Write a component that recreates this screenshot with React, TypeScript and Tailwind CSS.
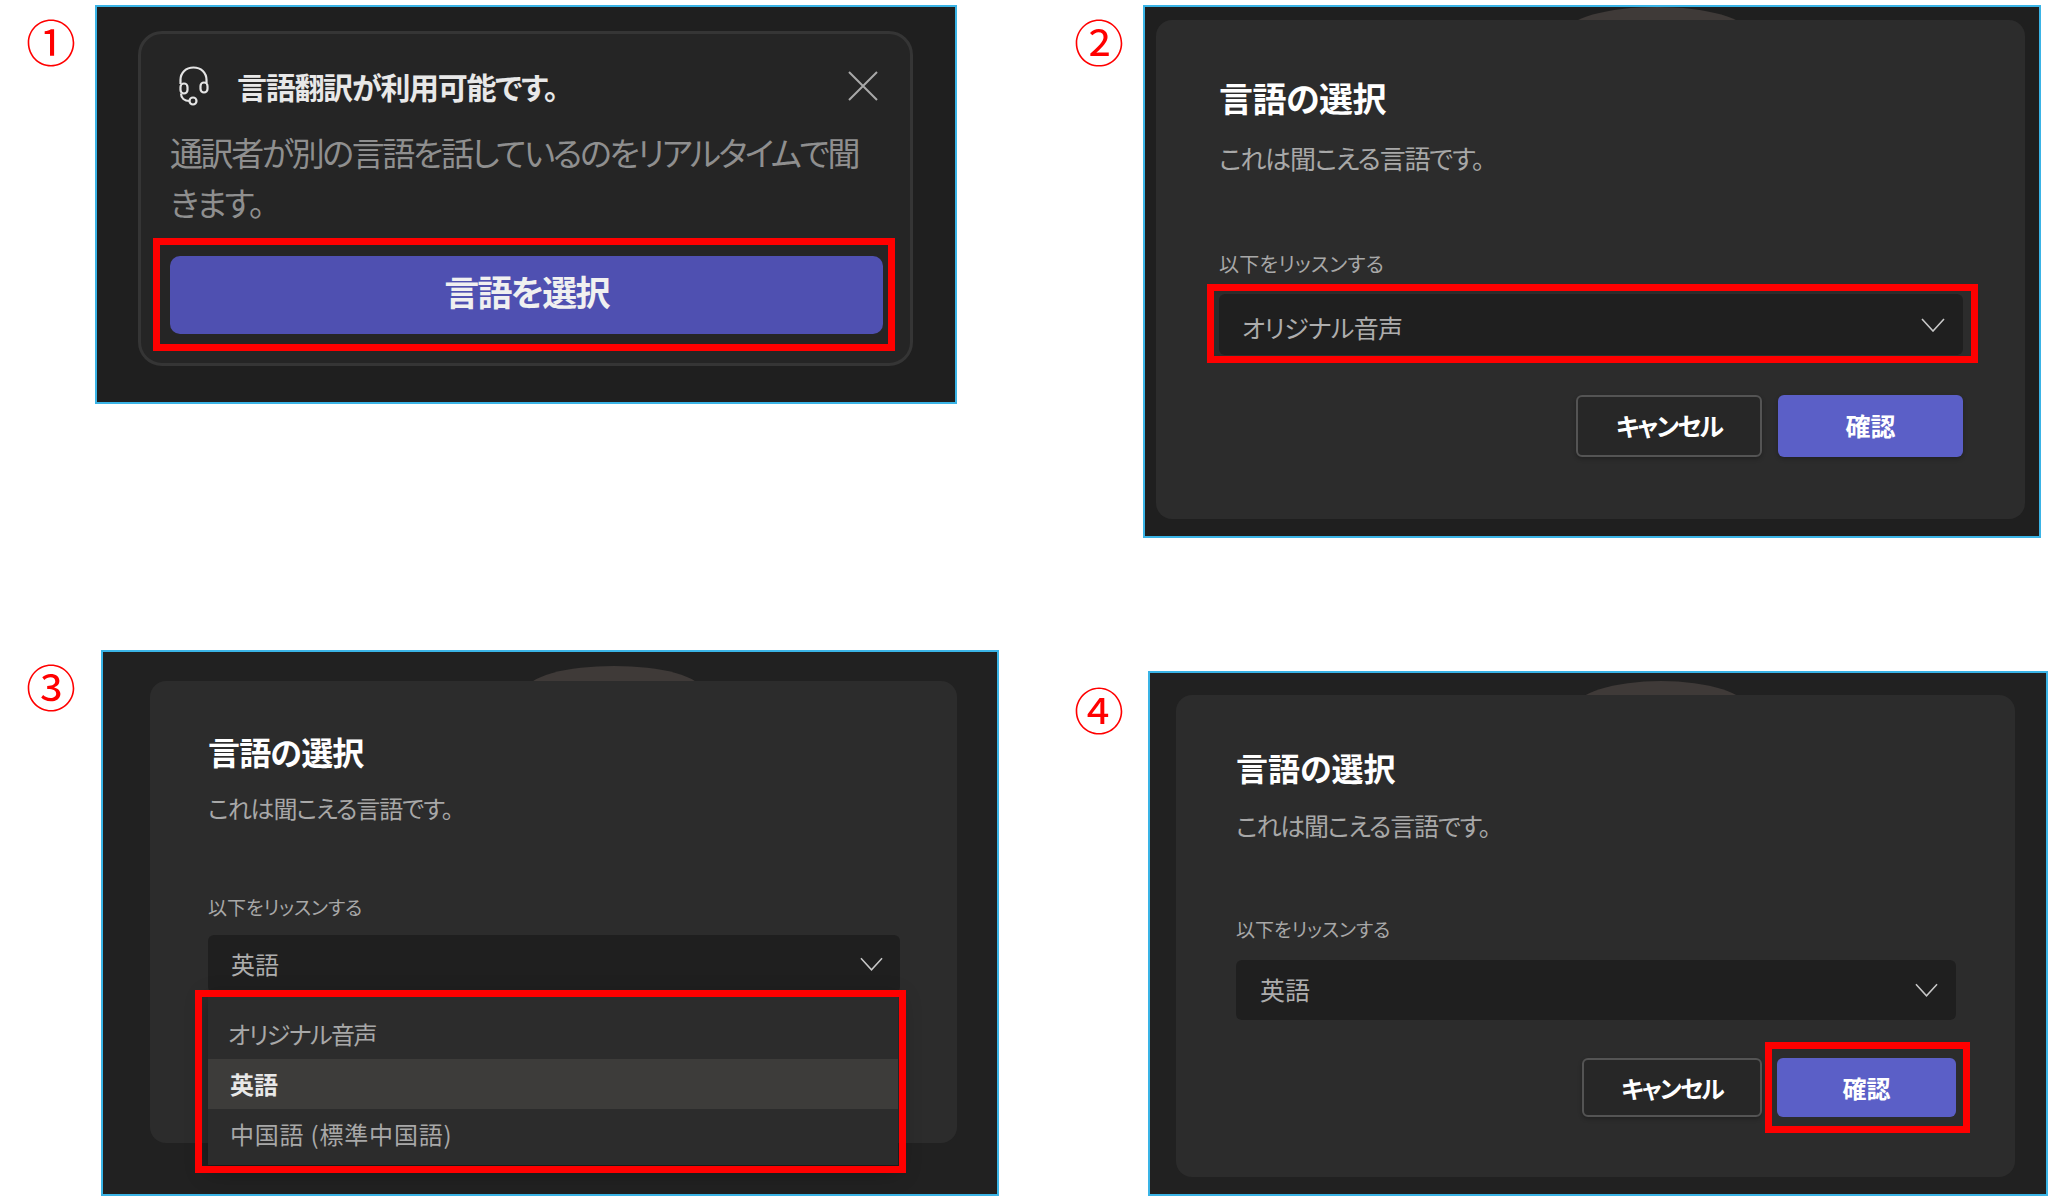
const font = "font-['Noto_Sans_CJK_JP','Liberation_Sans',sans-serif] [font-feature-settings:'palt']";

function Chevron({ className }: { className: string }) {
  return (
    <svg viewBox="0 0 24 14" fill="none" stroke="#c8c8c8" strokeWidth="1.6" className={className}>
      <path d="M1 1l11 12L23 1" />
    </svg>
  );
}

function Headset() {
  return (
    <svg viewBox="0 0 31 40" fill="none" stroke="#e4e4e4" strokeWidth="2.2" className="w-[31px] h-[40px] shrink-0 ml-[8px]">
      <path d="M2.5 18v-4C2.5 6.5 8 1.5 15.5 1.5S28.500 6.500 28.500 14v3" />
      <rect x="2.500" y="17.500" width="7" height="10" rx="3.500" />
      <rect x="22.500" y="16.500" width="7" height="10" rx="3.500" />
      <path d="M3 27.500c0 4.500 3.500 7.500 8.500 7.500" />
      <circle cx="15" cy="35" r="3.500" />
    </svg>
  );
}

function CloseIcon() {
  return (
    <svg viewBox="0 0 30 30" fill="none" stroke="#a8a8a8" strokeWidth="2" className="w-[30px] h-[30px] ml-auto mr-[5px]">
      <path d="M1 1l28 28M29 1L1 29" />
    </svg>
  );
}

export default function App() {
  return (
    <div className={`${font} relative w-[2048px] h-[1196px] bg-white overflow-hidden`}>
      {/* 1段目 */}
      <div className="flex h-[650px]">
        <div className="flex w-[1076px] pt-[5px]">
          <div className="w-[95px] pl-[26px] text-[50px] leading-[70px] text-[#ff0000]">①</div>
          <div className="w-[862px] h-[399px] border-2 border-[#3ab4e6] bg-[#1f1f1f] pt-[24px] pl-[41px]">
            <div className="w-[775px] h-[335px] rounded-[24px] border-[3px] border-[#353535] bg-[#252525] pt-[32px] pl-[29px] pr-[27px]">
              <div className="flex items-center h-[40px]">
                <Headset />
                <span className="ml-[28px] text-[30px] tracking-[-1.3px] font-bold text-[#e8e8e8]">言語翻訳が利用可能です。</span>
                <CloseIcon />
              </div>
              <p className="mt-[21px] text-[33px] tracking-[-2.4px] leading-[50px] text-[#8f8f8f] whitespace-nowrap">
                通訳者が別の言語を話しているのをリアルタイムで聞<br />きます。
              </p>
              <div className="relative mt-[29px]">
                <div className="flex items-center justify-center h-[78px] pb-[8px] rounded-[10px] bg-[#4f50b1] text-[35px] tracking-[-1.8px] font-bold text-[#f0f0f0]">
                  言語を選択
                </div>
                <div className="absolute -left-[17px] -right-[12px] -top-[18px] -bottom-[17px] border-[7px] border-[#ff0000]" />
              </div>
            </div>
          </div>
        </div>
        <div className="flex pt-[5px]">
          <div className="w-[69px] -ml-[2px] text-[50px] leading-[70px] text-[#ff0000]">②</div>
          <div className="relative w-[898px] h-[533px] border-2 border-[#3ab4e6] bg-[#1f1f1f] pt-[13px] pl-[11px]">
            <div className="absolute left-[421px] top-0 w-[182px] h-[52px] rounded-[50%] bg-[#3f3a38]" />
            <div className="relative w-[869px] h-[499px] rounded-[16px] bg-[#2c2c2c] pt-[58px] pl-[63px] pr-[62px]">
              <h2 className="text-[34px] tracking-[-0.5px] leading-[40px] font-bold text-white">言語の選択</h2>
              <p className="mt-[23px] text-[26px] tracking-[-1.2px] leading-[34px] text-[#a8a8a8]">これは聞こえる言語です。</p>
              <p className="mt-[76px] text-[20px] tracking-[0.3px] leading-[26px] text-[#a8a8a8]">以下をリッスンする</p>
              <div className="relative mt-[17px]">
                <div className="flex items-center justify-between h-[61px] rounded-[6px] bg-[#1f1f1f] pl-[23px] pr-[18px] text-[25px] tracking-[-0.7px] text-[#adadad]">
                  <span className="pt-[6px]">オリジナル音声</span>
                  <Chevron className="w-[24px] h-[14px]" />
                </div>
                <div className="absolute -left-[12px] -right-[15px] -top-[10px] -bottom-[8px] border-[7px] border-[#ff0000]" />
              </div>
              <div className="flex justify-end gap-[16px] mt-[40px]">
                <div className="flex items-center justify-center w-[186px] h-[62px] rounded-[6px] border-2 border-[#545454] bg-[#272727] text-[25px] tracking-[-1.8px] font-bold text-white shadow-[0_2px_4px_rgba(0,0,0,0.25)]">キャンセル</div>
                <div className="flex items-center justify-center w-[185px] h-[62px] rounded-[6px] bg-[#5b5fc7] text-[25px] font-bold text-white shadow-[0_2px_4px_rgba(0,0,0,0.25)]">確認</div>
              </div>
            </div>
          </div>
        </div>
      </div>

      {/* 2段目 */}
      <div className="flex h-[546px]">
        <div className="flex w-[1076px]">
          <div className="w-[101px] pl-[26px] text-[50px] leading-[70px] text-[#ff0000]">③</div>
          <div className="relative w-[898px] h-[546px] border-2 border-[#3ab4e6] bg-[#212121] pt-[29px] pl-[47px]">
            <div className="absolute left-[424px] top-[14px] w-[174px] h-[48px] rounded-[50%] bg-[#3f3a38]" />
            <div className="relative w-[807px] h-[462px] rounded-[16px] bg-[#2c2c2c] pt-[51px] pl-[58px] pr-[57px]">
              <h2 className="text-[32px] tracking-[-0.8px] leading-[38px] font-bold text-white">言語の選択</h2>
              <p className="mt-[22px] text-[24px] tracking-[-1.1px] leading-[32px] text-[#a8a8a8]">これは聞こえる言語です。</p>
              <p className="mt-[71px] text-[19px] leading-[24px] text-[#a8a8a8]">以下をリッスンする</p>
              <div className="relative mt-[16px]">
                <div className="flex items-center justify-between h-[58px] rounded-[6px] bg-[#1f1f1f] pl-[23px] pr-[17px] text-[24px] text-[#adadad]">
                  英語
                  <Chevron className="w-[23px] h-[14px]" />
                </div>
                <div className="absolute left-0 right-[2px] top-full bg-[#2c2c2c] pt-[16px] pb-[6px] shadow-[0_6px_20px_rgba(0,0,0,0.35)] text-[24px] text-[#a8a8a8]">
                  <div className="flex items-center h-[50px] pl-[20px] tracking-[-1.5px]">オリジナル音声</div>
                  <div className="flex items-center h-[50px] pl-[22px] bg-[#3d3c3a] font-bold text-[#e8e8e8]">英語</div>
                  <div className="flex items-center h-[50px] pl-[22px] tracking-[0.8px]">中国語 (標準中国語)</div>
                </div>
                <div className="absolute -left-[13px] -right-[6px] -bottom-[180px] h-[183px] border-[7px] border-[#ff0000]" />
              </div>
            </div>
          </div>
        </div>
        <div className="flex">
          <div className="w-[74px] -ml-[2px] pt-[23px] text-[50px] leading-[70px] text-[#ff0000]">④</div>
          <div className="mt-[21px] relative w-[900px] h-[525px] border-2 border-[#3ab4e6] bg-[#212121] pt-[22px] pl-[26px]">
            <div className="absolute left-[424px] top-[8px] w-[174px] h-[56px] rounded-[50%] bg-[#3f3a38]" />
            <div className="relative w-[839px] h-[482px] rounded-[16px] bg-[#2c2c2c] pt-[53px] pl-[60px] pr-[59px]">
              <h2 className="text-[32px] leading-[38px] font-bold text-white">言語の選択</h2>
              <p className="mt-[23px] text-[25px] tracking-[-1.2px] leading-[32px] text-[#a8a8a8]">これは聞こえる言語です。</p>
              <p className="mt-[76px] text-[19px] leading-[24px] text-[#a8a8a8]">以下をリッスンする</p>
              <div className="flex items-center justify-between mt-[19px] h-[60px] rounded-[6px] bg-[#1f1f1f] pl-[24px] pr-[18px] text-[25px] text-[#adadad]">
                英語
                <Chevron className="w-[23px] h-[14px]" />
              </div>
              <div className="flex justify-end gap-[15px] mt-[38px]">
                <div className="flex items-center justify-center w-[180px] h-[59px] rounded-[6px] border-2 border-[#545454] bg-[#272727] text-[24px] tracking-[-1.8px] font-bold text-white shadow-[0_2px_4px_rgba(0,0,0,0.25)]">キャンセル</div>
                <div className="relative flex items-center justify-center w-[179px] h-[59px] rounded-[6px] bg-[#5b5fc7] text-[24px] font-bold text-white">
                  確認
                  <div className="absolute -left-[12px] -right-[14px] -top-[16px] -bottom-[16px] border-[7px] border-[#ff0000]" />
                </div>
              </div>
            </div>
          </div>
        </div>
      </div>
    </div>
  );
}
